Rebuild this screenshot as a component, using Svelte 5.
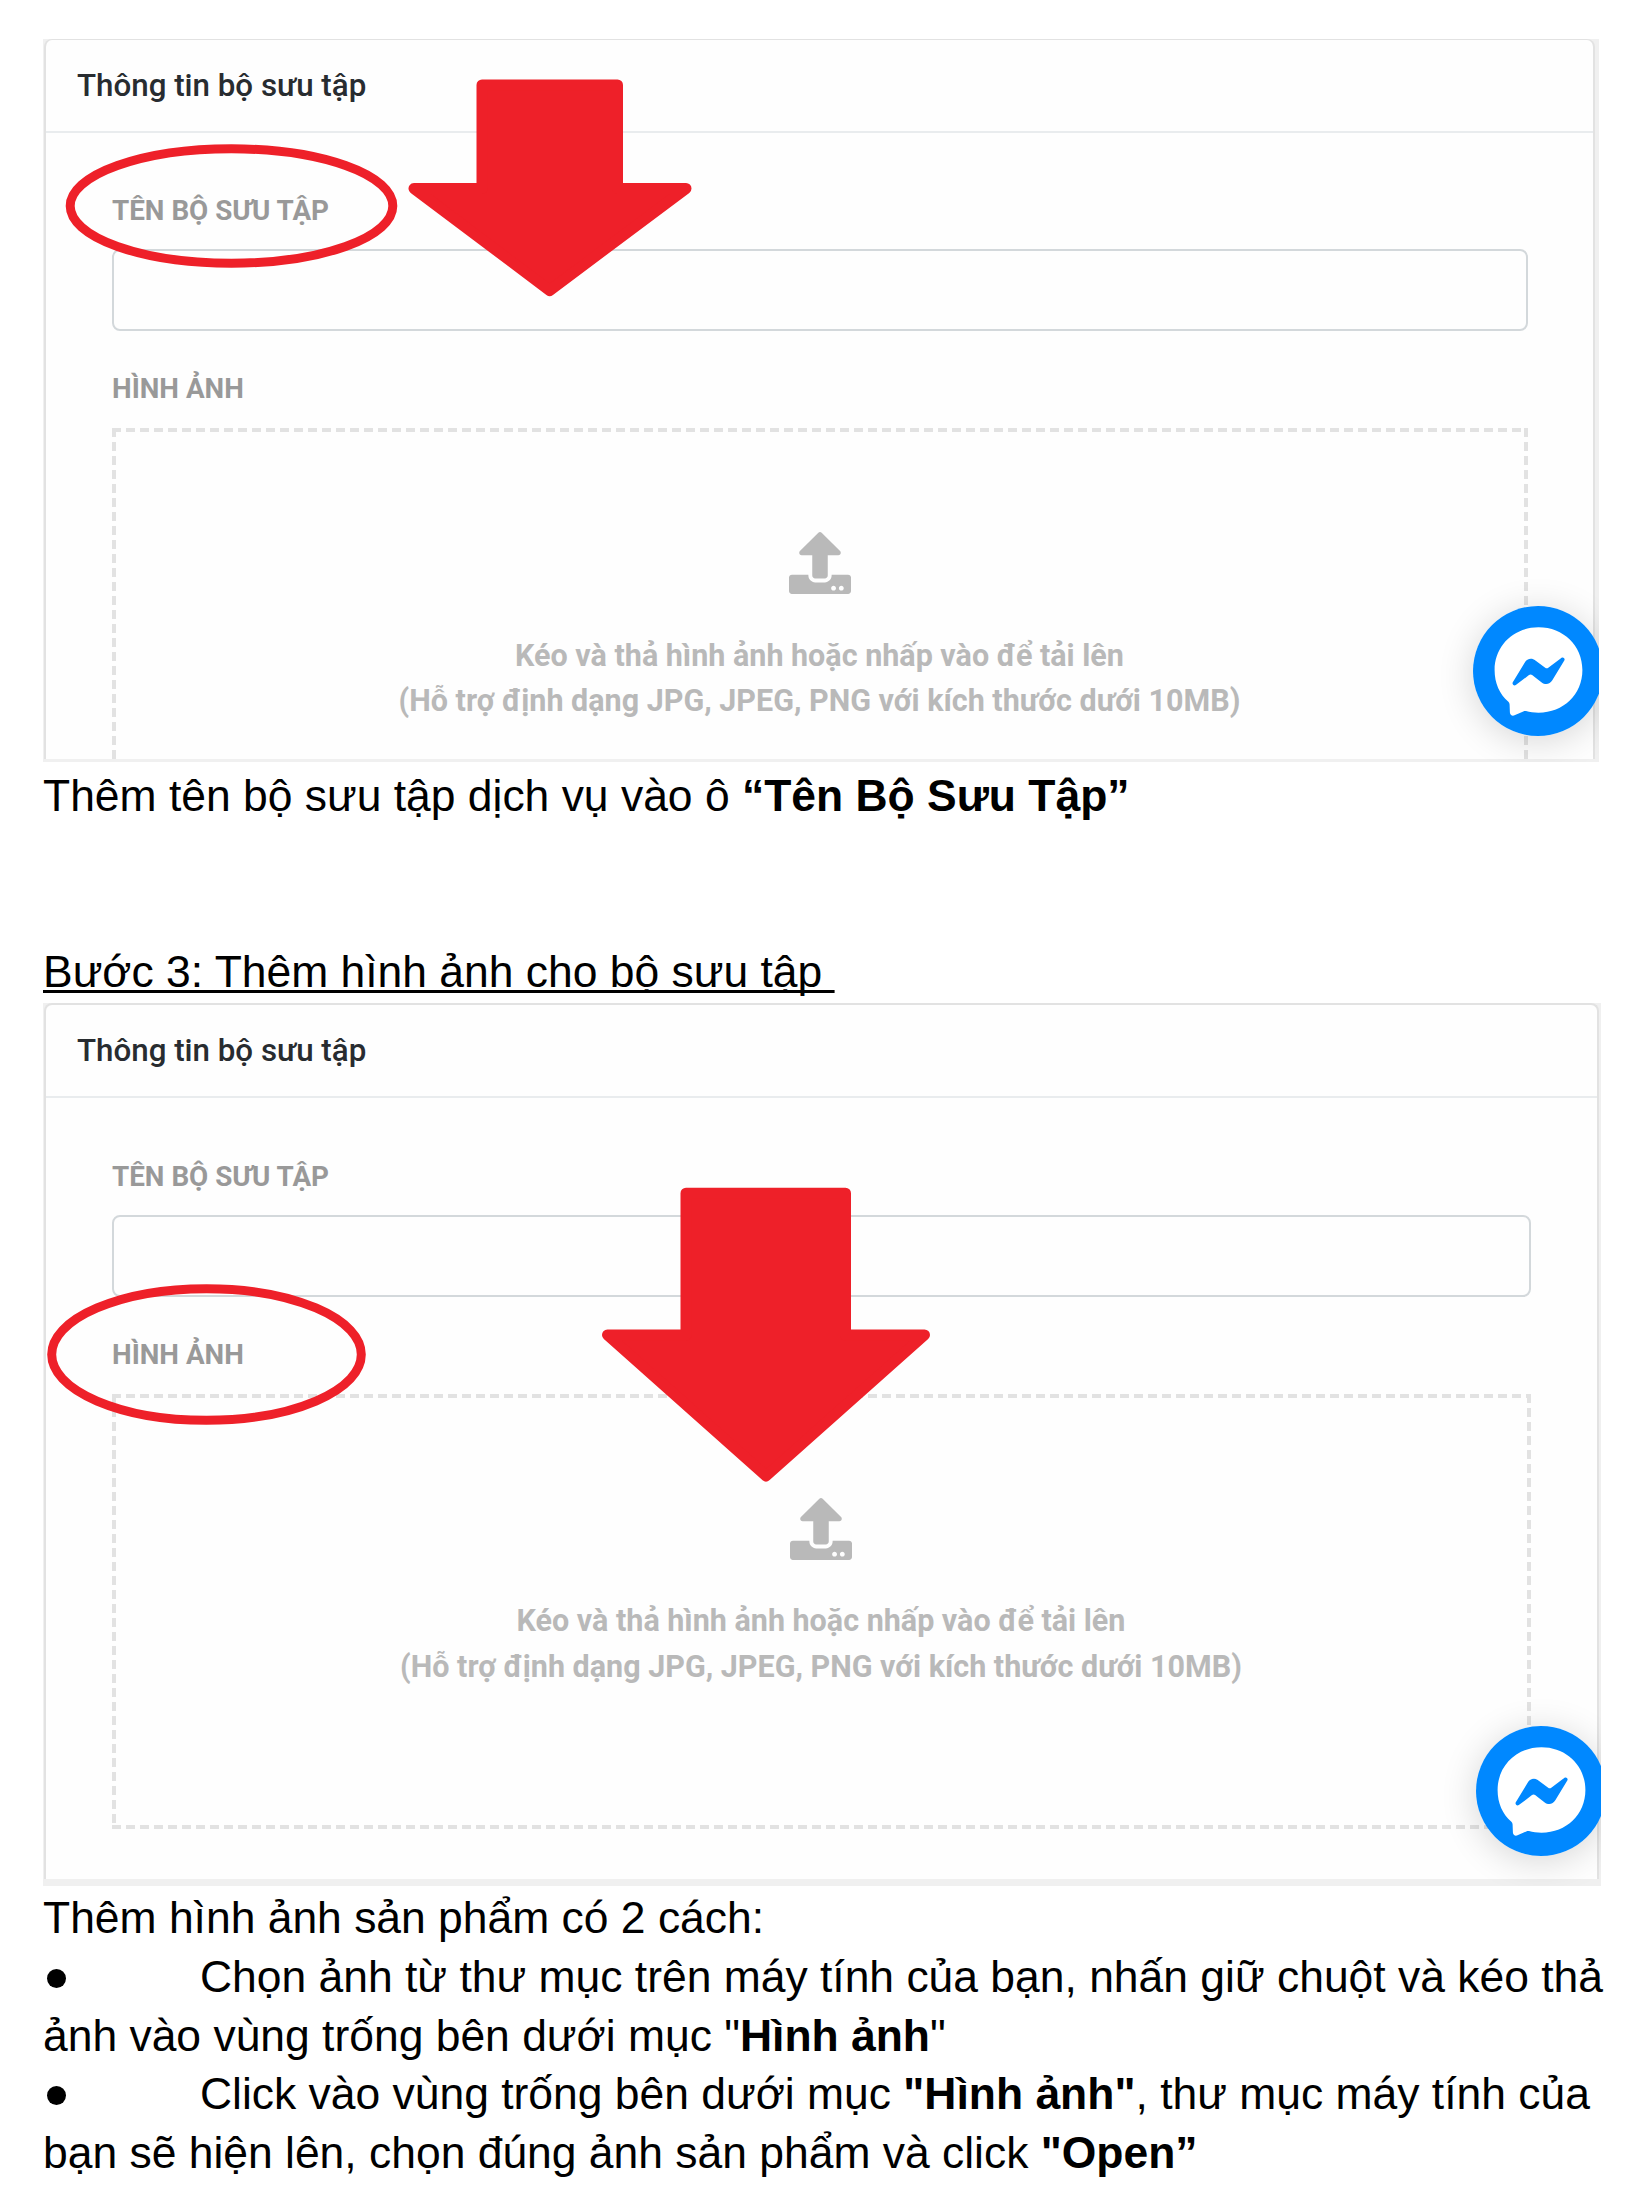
<script>
  const uploadPath =
    'M296 384h-80c-13.3 0-24-10.7-24-24V192h-87.7c-17.8 0-26.7-21.5-14.1-34.1L242.3 5.7c7.5-7.5 19.8-7.5 27.3 0l152.2 152.2c12.6 12.6 3.7 34.1-14.1 34.1H320v168c0 13.3-10.7 24-24 24zm216-8v112c0 13.3-10.7 24-24 24H24c-13.3 0-24-10.7-24-24V376c0-13.3 10.7-24 24-24h136v8c0 30.9 25.1 56 56 56h80c30.9 0 56-25.1 56-56v-8h136c13.3 0 24 10.7 24 24zm-124 88c0-11-9-20-20-20s-20 9-20 20 9 20 20 20 20-9 20-20zm64 0c0-11-9-20-20-20s-20 9-20 20 9 20 20 20 20-9 20-20z';
</script>

{#snippet form(closed)}
  <div class="card">
    <div class="header">Thông tin bộ sưu tập</div>
    <div class="body">
      <div class="label first">TÊN BỘ SƯU TẬP</div>
      <div class="input"></div>
      <div class="label next">HÌNH ẢNH</div>
      <div class="drop">
        <svg class="dashes" width="100%" height="100%">
          <line x1="0" y1="2" x2="100%" y2="2" />
          <line x1="2" y1="0" x2="2" y2="100%" />
          <line class="far" x1="100%" y1="0" x2="100%" y2="100%" />
          {#if closed}
            <line class="low" x1="0" y1="100%" x2="100%" y2="100%" />
          {/if}
        </svg>
        <svg class="upload" viewBox="0 0 512 512"><path d={uploadPath} /></svg>
        <div class="hint">Kéo và thả hình ảnh hoặc nhấp vào để tải lên</div>
        <div class="hint">(Hỗ trợ định dạng JPG, JPEG, PNG với kích thước dưới 10MB)</div>
      </div>
    </div>
  </div>
  <div class="chat">
    <svg viewBox="0 0 130 130">
      <circle cx="65" cy="65" r="65" fill="#0088ff" />
      <path
        fill="#fff"
        d="M65.500 21.300c25 0 43.900 18.500 43.900 42.700s-18.900 42.700-43.900 42.700c-4.500 0-8.700-.6-12.500-1.600-1-.2-1.800-.1-2.700.3l-8.800 3.900c-2.300 1-4.500-.4-4.600-2.900l-.3-8c0-1-.5-1.900-1.200-2.600C26.500 88 21.600 77.100 21.600 64c0-24.200 18.900-42.700 43.900-42.700z"
      />
      <path
        fill="#0088ff"
        d="M39.800 76.200 51.800 56.500c2.300-4 7-4.800 10.600-2.100l9.800 7.400c.9.700 2.200.7 3.100 0l13-9.900c1.800-1.300 4.200.7 3 2.700L79.300 74.300c-2.300 4-7 4.800-10.600 2.100l-9.600-7.300c-.9-.7-2.200-.7-3.100 0l-13.200 10c-1.800 1.300-4.100-.8-3-2.900z"
      />
    </svg>
  </div>
{/snippet}

<main>
  <section class="shot one">
    {@render form(false)}
    <svg class="marks" viewBox="0 0 1556 723">
      <ellipse cx="188.500" cy="167" rx="161.300" ry="57.200" />
      <path d="M439 46H574.500V149.500H643L506.700 251.500 371 149.500H439Z" />
    </svg>
  </section>

  <p class="text caption">Thêm tên bộ sưu tập dịch vụ vào ô <b>“Tên Bộ Sưu Tập”</b></p>
  <h2 class="text"><span>Bước 3: Thêm hình ảnh cho bộ sưu tập&nbsp;</span></h2>

  <section class="shot two">
    {@render form(true)}
    <svg class="marks" viewBox="0 0 1558 883">
      <ellipse cx="163.500" cy="351.500" rx="154.800" ry="65.800" />
      <path d="M643 190.200H802.500V332H881.500L723 473 564.500 332H643Z" />
    </svg>
  </section>

  <div class="steps">
    <p class="text">Thêm hình ảnh sản phẩm có 2 cách:</p>
    <p class="text row"><i></i><span>Chọn ảnh từ thư mục trên máy tính của bạn, nhấn giữ chuột và kéo thả</span></p>
    <p class="text">ảnh vào vùng trống bên dưới mục "<b>Hình ảnh</b>"</p>
    <p class="text row"><i></i><span>Click vào vùng trống bên dưới mục <b>"Hình ảnh"</b>, thư mục máy tính của</span></p>
    <p class="text">bạn sẽ hiện lên, chọn đúng ảnh sản phẩm và click <b>"Open”</b></p>
  </div>
</main>

<style>
  :global(body) {
    margin: 0;
    background: #fff;
  }
  main {
    box-sizing: border-box;
    width: 1648px;
    height: 2212px;
    padding: 39px 0 0 43px;
    overflow: hidden;
  }
  .shot {
    position: relative;
    box-sizing: border-box;
    overflow: hidden;
    background: #f0f0f0;
    font-family: Roboto, sans-serif;
  }
  .one {
    width: 1556px;
    height: 723px;
    padding: 0 4px 3px 1px;
  }
  .two {
    width: 1558px;
    height: 883px;
    padding: 0 2px 7px 1px;
  }
  .card {
    box-sizing: border-box;
    height: 100%;
    overflow: hidden;
    background: #fefefe;
    border: 2px solid #e2e2e2;
    border-top-width: 1px;
    border-bottom: 0;
    border-radius: 8px 8px 0 0;
  }
  .two .card {
    border-top-width: 2px;
  }
  .header {
    display: flex;
    align-items: center;
    box-sizing: border-box;
    height: 93px;
    padding-left: 31px;
    border-bottom: 2px solid #e9ecee;
    color: #282c30;
    font-size: 31.300px;
    font-weight: 500;
    white-space: nowrap;
  }
  .body {
    padding: 60px 0 0 66px;
  }
  .two .body {
    padding-top: 61px;
  }
  .label {
    height: 34px;
    margin-bottom: 22px;
    color: #999;
    font-size: 27.800px;
    font-weight: 700;
    line-height: 34px;
    white-space: nowrap;
  }
  .first {
    line-height: 36px;
  }
  .next {
    margin-top: 41px;
  }
  .input {
    box-sizing: border-box;
    width: 1416px;
    height: 82px;
    border: 2px solid #d3d8db;
    border-radius: 8px;
  }
  .drop {
    position: relative;
    box-sizing: border-box;
    display: flex;
    flex-direction: column;
    align-items: center;
    width: 1416px;
    height: 435px;
    padding: 104px 1px 0 0;
  }
  .two .input,
  .two .drop {
    width: 1419px;
  }
  .dashes {
    position: absolute;
    inset: 0;
  }
  line {
    stroke: #e2e2e2;
    stroke-width: 4;
    stroke-dasharray: 9 5;
  }
  .far {
    transform: translateX(-2px);
  }
  .low {
    transform: translateY(-2px);
  }
  .upload {
    width: 62px;
    height: 62px;
    margin-bottom: 38.500px;
    fill: #b9b9b9;
  }
  .hint {
    color: #b9b9b9;
    font-size: 30.500px;
    font-weight: 700;
    line-height: 45.500px;
    white-space: nowrap;
  }
  .chat {
    position: absolute;
    width: 130px;
    height: 130px;
    border-radius: 50%;
    box-shadow: 0 5px 36px rgba(0, 0, 0, 0.16);
  }
  .chat svg {
    display: block;
  }
  .one .chat {
    left: 1429.500px;
    top: 567.400px;
  }
  .two .chat {
    left: 1432.500px;
    top: 723px;
  }
  .marks {
    position: absolute;
    inset: 0;
    width: 100%;
    height: 100%;
  }
  .marks ellipse {
    fill: none;
    stroke: #ee2029;
    stroke-width: 9;
  }
  .marks path {
    fill: #ee2029;
    stroke: #ee2029;
    stroke-width: 11;
    stroke-linejoin: round;
  }
  .text {
    height: 58.800px;
    margin: 0;
    color: #000;
    font-family: 'Liberation Sans', Arial, sans-serif;
    font-size: 44.430px;
    font-weight: 400;
    line-height: 60.400px;
    white-space: pre;
  }
  .caption {
    margin: 4px 0 117px;
  }
  h2.text {
    height: 61.200px;
    text-decoration: underline;
    text-decoration-thickness: 3px;
    text-decoration-skip-ink: none;
    text-underline-offset: 3px;
  }
  .steps {
    padding-top: 2px;
  }
  .row {
    display: flex;
    align-items: flex-start;
  }
  .row i {
    flex: none;
    width: 19px;
    height: 19px;
    margin: 22px 134px 0 4px;
    border-radius: 50%;
    background: #000;
  }
</style>
